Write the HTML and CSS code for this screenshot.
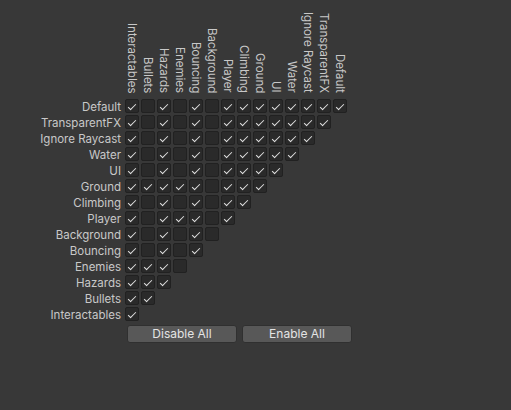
FILE: index.html
```html
<!DOCTYPE html>
<html>
<head>
<meta charset="utf-8">
<link rel="stylesheet" href="styles.css">
</head>
<body>
<div class="panel">
  <div class="head">
    <div class="spacer"></div>
    <div class="hc"><span>Interactables</span></div>
    <div class="hc"><span>Bullets</span></div>
    <div class="hc"><span>Hazards</span></div>
    <div class="hc"><span>Enemies</span></div>
    <div class="hc"><span>Bouncing</span></div>
    <div class="hc"><span>Background</span></div>
    <div class="hc"><span>Player</span></div>
    <div class="hc"><span>Climbing</span></div>
    <div class="hc"><span>Ground</span></div>
    <div class="hc"><span>UI</span></div>
    <div class="hc"><span>Water</span></div>
    <div class="hc"><span>Ignore Raycast</span></div>
    <div class="hc"><span>TransparentFX</span></div>
    <div class="hc"><span>Default</span></div>
  </div>
  <div class="row"><div class="lbl">Default</div><i class="cb on"></i><i class="cb"></i><i class="cb on"></i><i class="cb"></i><i class="cb on"></i><i class="cb"></i><i class="cb on"></i><i class="cb on"></i><i class="cb on"></i><i class="cb on"></i><i class="cb on"></i><i class="cb on"></i><i class="cb on"></i><i class="cb on"></i></div>
  <div class="row"><div class="lbl">TransparentFX</div><i class="cb on"></i><i class="cb"></i><i class="cb on"></i><i class="cb"></i><i class="cb on"></i><i class="cb"></i><i class="cb on"></i><i class="cb on"></i><i class="cb on"></i><i class="cb on"></i><i class="cb on"></i><i class="cb on"></i><i class="cb on"></i></div>
  <div class="row"><div class="lbl">Ignore Raycast</div><i class="cb on"></i><i class="cb"></i><i class="cb on"></i><i class="cb"></i><i class="cb on"></i><i class="cb"></i><i class="cb on"></i><i class="cb on"></i><i class="cb on"></i><i class="cb on"></i><i class="cb on"></i><i class="cb on"></i></div>
  <div class="row"><div class="lbl">Water</div><i class="cb on"></i><i class="cb"></i><i class="cb on"></i><i class="cb"></i><i class="cb on"></i><i class="cb"></i><i class="cb on"></i><i class="cb on"></i><i class="cb on"></i><i class="cb on"></i><i class="cb on"></i></div>
  <div class="row"><div class="lbl">UI</div><i class="cb on"></i><i class="cb"></i><i class="cb on"></i><i class="cb"></i><i class="cb on"></i><i class="cb"></i><i class="cb on"></i><i class="cb on"></i><i class="cb on"></i><i class="cb on"></i></div>
  <div class="row"><div class="lbl">Ground</div><i class="cb on"></i><i class="cb on"></i><i class="cb on"></i><i class="cb on"></i><i class="cb on"></i><i class="cb"></i><i class="cb on"></i><i class="cb on"></i><i class="cb on"></i></div>
  <div class="row"><div class="lbl">Climbing</div><i class="cb on"></i><i class="cb"></i><i class="cb on"></i><i class="cb"></i><i class="cb on"></i><i class="cb"></i><i class="cb on"></i><i class="cb on"></i></div>
  <div class="row"><div class="lbl">Player</div><i class="cb on"></i><i class="cb"></i><i class="cb on"></i><i class="cb on"></i><i class="cb on"></i><i class="cb"></i><i class="cb on"></i></div>
  <div class="row"><div class="lbl">Background</div><i class="cb on"></i><i class="cb"></i><i class="cb on"></i><i class="cb"></i><i class="cb on"></i><i class="cb"></i></div>
  <div class="row"><div class="lbl">Bouncing</div><i class="cb on"></i><i class="cb"></i><i class="cb on"></i><i class="cb"></i><i class="cb on"></i></div>
  <div class="row"><div class="lbl">Enemies</div><i class="cb on"></i><i class="cb on"></i><i class="cb on"></i><i class="cb"></i></div>
  <div class="row"><div class="lbl">Hazards</div><i class="cb on"></i><i class="cb on"></i><i class="cb on"></i></div>
  <div class="row"><div class="lbl">Bullets</div><i class="cb on"></i><i class="cb on"></i></div>
  <div class="row"><div class="lbl">Interactables</div><i class="cb on"></i></div>
  <div class="btns">
    <button class="btn">Disable All</button>
    <button class="btn">Enable All</button>
  </div>
</div>
</body>
</html>
```
FILE: styles.css
```css
html, body {
  margin: 0;
  padding: 0;
  background: #383838;
}
body {
  font-family: Inter, "Noto Sans", sans-serif;
  font-size: 11.5px;
  color: #c8c8c8;
  width: 511px;
  height: 410px;
  overflow: hidden;
}
.panel {
  display: flex;
  flex-direction: column;
}
.head {
  display: flex;
  height: 99px;
}
.spacer {
  width: 125px;
  flex: none;
}
.hc {
  width: 16px;
  flex: none;
  display: flex;
  flex-direction: column;
  justify-content: flex-end;
  padding-bottom: 6px;
  box-sizing: border-box;
}
.hc span {
  writing-mode: vertical-rl;
  line-height: 14px;
  width: 14px;
  white-space: nowrap;
}
.row {
  display: flex;
  height: 16px;
}
.lbl {
  width: 125px;
  flex: none;
  box-sizing: border-box;
  padding-right: 4px;
  padding-top: 1px;
  text-align: right;
  line-height: 14px;
  white-space: nowrap;
}
.cb {
  width: 14px;
  height: 14px;
  margin-right: 2px;
  flex: none;
  box-sizing: border-box;
  background: #2a2a2a;
  border: 1px solid #212121;
  border-radius: 2px;
  display: flex;
  align-items: center;
  justify-content: center;
}
.cb.on::after {
  content: "";
  width: 3px;
  height: 7px;
  margin-top: -1px;
  border: solid #e2e2e2;
  border-width: 0 1.6px 1.6px 0;
  transform: rotate(45deg);
}
.btns {
  display: flex;
  gap: 5px;
  padding-left: 127px;
  margin-top: 2px;
}
.btn {
  width: 110px;
  height: 18px;
  padding: 0;
  box-sizing: border-box;
  background: #585858;
  border: 1px solid #303030;
  border-radius: 3px;
  color: #e4e4e4;
  font-family: Inter, "Noto Sans", sans-serif;
  font-size: 12px;
  line-height: 16px;
}
```
